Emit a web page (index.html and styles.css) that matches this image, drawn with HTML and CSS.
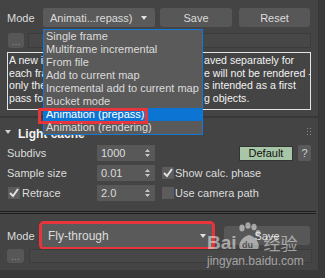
FILE: index.html
```html
<!DOCTYPE html>
<html>
<head>
    <meta charset="UTF-8">
    <title>Light cache</title>
    <link rel="stylesheet" href="styles.css">
</head>
<body>
<div class="app">
    <div class="panel top">
        <div class="row">
            <span class="label">Mode</span>
            <div class="combo combo-top"><span>Animati...repass)</span><span class="arrow"></span></div>
            <button class="btn save-top">Save</button>
            <button class="btn reset">Reset</button>
        </div>
        <div class="row file-row">
            <button class="btn dots">...</button>
            <div class="field"></div>
        </div>
        <div class="info">
            <div class="line"><span class="head">A new irradiance map is computed and s</span><span>aved separately for</span></div>
            <div class="line"><span class="head">each frame, but the final image itself</span><span>e will not be rendered -</span></div>
            <div class="line"><span class="head">only the irradiance map. This mode i</span><span>s intended as a first</span></div>
            <div class="line"><span class="head">pass for animations with movin</span><span>g objects.</span></div>
        </div>
    </div>

    <div class="panel rollout">
        <div class="rollout-head">
            <span class="tri"></span>
            <span class="title">Light cache</span>
            <svg class="grip" width="5" height="8" viewBox="0 0 5 8"><g fill="#8a8a8a"><rect x="0" y="0" width="1" height="1"/><rect x="3" y="0" width="1" height="1"/><rect x="0" y="3" width="1" height="1"/><rect x="3" y="3" width="1" height="1"/><rect x="0" y="6" width="1" height="1"/><rect x="3" y="6" width="1" height="1"/></g></svg>
        </div>

        <div class="params">
            <div class="prow">
                <span class="plabel">Subdivs</span>
                <div class="spin"><span>1000</span><svg width="5" height="10" viewBox="0 0 5 10"><path d="M0 4 L2.5 1 L5 4 Z M0 6 L2.5 9 L5 6 Z" fill="#c8c8c8"/></svg></div>
                <div class="pright">
                    <button class="default">Default</button>
                    <button class="help">?</button>
                </div>
            </div>
            <div class="prow">
                <span class="plabel">Sample size</span>
                <div class="spin"><span>0.01</span><svg width="5" height="10" viewBox="0 0 5 10"><path d="M0 4 L2.5 1 L5 4 Z M0 6 L2.5 9 L5 6 Z" fill="#c8c8c8"/></svg></div>
                <div class="pright">
                    <span class="check on"><svg width="12" height="12" viewBox="0 0 12 12"><path d="M2 6 L5 9 L10 2" stroke="#e0e0e0" stroke-width="2" fill="none"/></svg></span>
                    <span>Show calc. phase</span>
                </div>
            </div>
            <div class="prow">
                <span class="plabel retrace"><span class="check on"><svg width="12" height="12" viewBox="0 0 12 12"><path d="M2 6 L5 9 L10 2" stroke="#e0e0e0" stroke-width="2" fill="none"/></svg></span>Retrace</span>
                <div class="spin"><span>2.0</span><svg width="5" height="10" viewBox="0 0 5 10"><path d="M0 4 L2.5 1 L5 4 Z M0 6 L2.5 9 L5 6 Z" fill="#c8c8c8"/></svg></div>
                <div class="pright">
                    <span class="check"></span>
                    <span>Use camera path</span>
                </div>
            </div>
        </div>

        <div class="sep"></div>

        <div class="row mode-row">
            <span class="label">Mode</span>
            <div class="combo combo-bottom"><span>Fly-through</span><span class="arrow"></span></div>
            <button class="btn save-bottom">Save</button>
        </div>
        <div class="row file-row2">
            <button class="btn dots2">...</button>
            <div class="field field2"></div>
        </div>
    </div>

    <ul class="dropdown">
        <li>Single frame</li>
        <li>Multiframe incremental</li>
        <li>From file</li>
        <li>Add to current map</li>
        <li>Incremental add to current map</li>
        <li>Bucket mode</li>
        <li class="selected">Animation (prepass)</li>
        <li>Animation (rendering)</li>
    </ul>

    <div class="watermark">
        <div class="wm-logo">
            <span>Bai</span>
            <svg width="24" height="30" viewBox="0 0 24 30">
                <g fill="#fff">
                    <ellipse cx="5" cy="6" rx="2.6" ry="3.4"/>
                    <ellipse cx="11" cy="3.5" rx="2.6" ry="3.3"/>
                    <ellipse cx="17" cy="5" rx="2.6" ry="3.3"/>
                    <ellipse cx="21" cy="11" rx="2.4" ry="3"/>
                    <path d="M3 27 C0 22 6 14 12 13 C18 14 24 22 21 27 Z"/>
                </g>
                <text x="5" y="26" font-size="9" font-family="Liberation Sans, sans-serif" fill="#5a5a5a" font-weight="bold">du</text>
            </svg>
            <span class="wm-cn">经验</span>
        </div>
        <div class="wm-url">jingyan.baidu.com</div>
    </div>
</div>
</body>
</html>
```

FILE: styles.css
```css
body {
    margin: 0;
    background-color: #3a3a3a;
    color: #dcdcdc;
    font-family: "Liberation Sans", Arial, sans-serif;
    font-size: 11px;
}

.app {
    position: relative;
    width: 325px;
    height: 278px;
    overflow: hidden;
}

.panel {
    width: 319px;
    background-color: #444;
    border-right: 1px solid #363636;
    box-sizing: border-box;
}

.row {
    display: flex;
    align-items: center;
}

.label {
    width: 36px;
}

button {
    font-family: inherit;
    font-size: 11px;
    color: #dcdcdc;
    padding: 0;
    border: none;
    cursor: pointer;
}

.btn {
    height: 19px;
    background-color: #575757;
    border-radius: 3px;
}

.combo {
    display: flex;
    align-items: center;
    justify-content: space-between;
    background-color: #5a5a5a;
    border-radius: 2px;
    box-sizing: border-box;
}

.arrow {
    width: 0;
    height: 0;
    border-left: 3px solid transparent;
    border-right: 3px solid transparent;
    border-top: 4px solid #e0e0e0;
}

/* top panel */

.top {
    height: 118px;
    padding: 8px 0 0 7px;
    border-bottom: 2px solid #383838;
}

.combo-top {
    width: 112px;
    height: 19px;
    padding: 0 8px 0 7px;
}

.save-top {
    width: 72px;
    margin-left: 5px;
}

.reset {
    width: 71px;
    margin-left: 7px;
}

.file-row {
    margin-top: 6px;
}

.dots {
    width: 16px;
    height: 15px;
    margin-left: 1px;
    color: #8c8c8c;
    line-height: 10px;
}

.field {
    width: 283px;
    height: 15px;
    margin-left: 4px;
    background-color: #474747;
    border: 1px solid #3c3c3c;
    box-sizing: border-box;
}

.info {
    width: 304px;
    height: 58px;
    margin-top: 4px;
    padding: 1px 1px;
    border: 1px solid #e4e4e4;
    box-sizing: border-box;
    font-size: 10.6px;
    line-height: 12.6px;
    color: #f2f2f2;
    white-space: nowrap;
    overflow: hidden;
}

.line {
    display: flex;
}

.line .head {
    width: 195px;
    flex: none;
    overflow: hidden;
}

/* Light cache rollout */

.rollout {
    height: 152px;
}

.rollout-head {
    display: flex;
    align-items: center;
    height: 27px;
    padding-left: 5px;
}

.tri {
    width: 0;
    height: 0;
    border-left: 3px solid transparent;
    border-right: 3px solid transparent;
    border-top: 4px solid #d0d0d0;
}

.title {
    margin-left: 7px;
    padding-top: 5px;
    font-size: 12px;
    font-weight: bold;
    color: #f4f4f4;
}

.grip {
    margin-left: auto;
    margin-right: 6px;
}

.params {
    display: flex;
    flex-direction: column;
    gap: 4px;
    padding-left: 7px;
}

.prow {
    display: flex;
    align-items: center;
    height: 16px;
}

.plabel {
    width: 90px;
}

.retrace {
    display: flex;
    align-items: center;
}

.retrace .check {
    margin-left: 1px;
    margin-right: 2px;
}

.spin {
    display: flex;
    align-items: center;
    justify-content: space-between;
    width: 58px;
    height: 16px;
    padding: 0 5px 0 4px;
    background-color: #585858;
    box-sizing: border-box;
}

.pright {
    display: flex;
    align-items: center;
    margin-left: 7px;
    flex: 1;
}

.default {
    width: 54px;
    height: 15px;
    margin-left: 77px;
    background-color: #a7c6a7;
    border: 1px solid #333;
    color: #111;
    box-sizing: border-box;
}

.help {
    width: 13px;
    height: 16px;
    margin-left: 5px;
    background-color: #5a5a5a;
    border-radius: 2px;
    color: #cfcfcf;
}

.check {
    display: inline-flex;
    width: 12px;
    height: 12px;
    margin-right: 1px;
    background-color: #5c5c5c;
}

.sep {
    width: 316px;
    height: 1px;
    margin-top: 10px;
    border-top: 1px solid #1c1c1c;
    border-bottom: 1px solid #1c1c1c;
    background-color: #4c4c4c;
}

.mode-row {
    margin-top: 10px;
    padding-left: 7px;
}

.mode-row .label {
    width: 35px;
}

.combo-bottom {
    width: 170px;
    height: 23px;
    padding: 0 6px 0 6px;
    outline: 3px solid #e8353b;
    font-size: 12px;
}

.save-bottom {
    width: 86px;
    margin-left: 12px;
}

.file-row2 {
    margin-top: 2px;
    padding-left: 7px;
}

.dots2 {
    width: 17px;
    height: 14px;
    color: #8c8c8c;
    line-height: 8px;
}

.field2 {
    width: 283px;
    height: 14px;
    margin-left: 5px;
}

/* open mode list */

.dropdown {
    position: absolute;
    left: 43px;
    top: 29px;
    width: 160px;
    margin: 0;
    padding: 0;
    list-style: none;
    background-color: #5a5a5a;
    border: 1px solid #1479d6;
    box-sizing: border-box;
}

.dropdown li {
    position: relative;
    height: 13px;
    padding-left: 2px;
    line-height: 13px;
    white-space: nowrap;
}

.dropdown .selected {
    background-color: #0c74d2;
    color: #fff;
}

.dropdown .selected::after {
    content: "";
    position: absolute;
    left: -6px;
    top: 0;
    width: 104px;
    height: 10px;
    border: 3px solid #e8353b;
}

/* screenshot watermark */

.watermark {
    position: absolute;
    left: 207px;
    top: 222px;
    color: #fff;
    opacity: 0.5;
}

.wm-logo {
    display: flex;
    align-items: flex-end;
    font-size: 19px;
    font-weight: bold;
    line-height: 18px;
}

.wm-cn {
    margin-left: 3px;
    font-family: "Noto Sans CJK SC", sans-serif;
    font-size: 17px;
    font-weight: normal;
}

.wm-url {
    margin-top: 2px;
    font-size: 12px;
}
```
